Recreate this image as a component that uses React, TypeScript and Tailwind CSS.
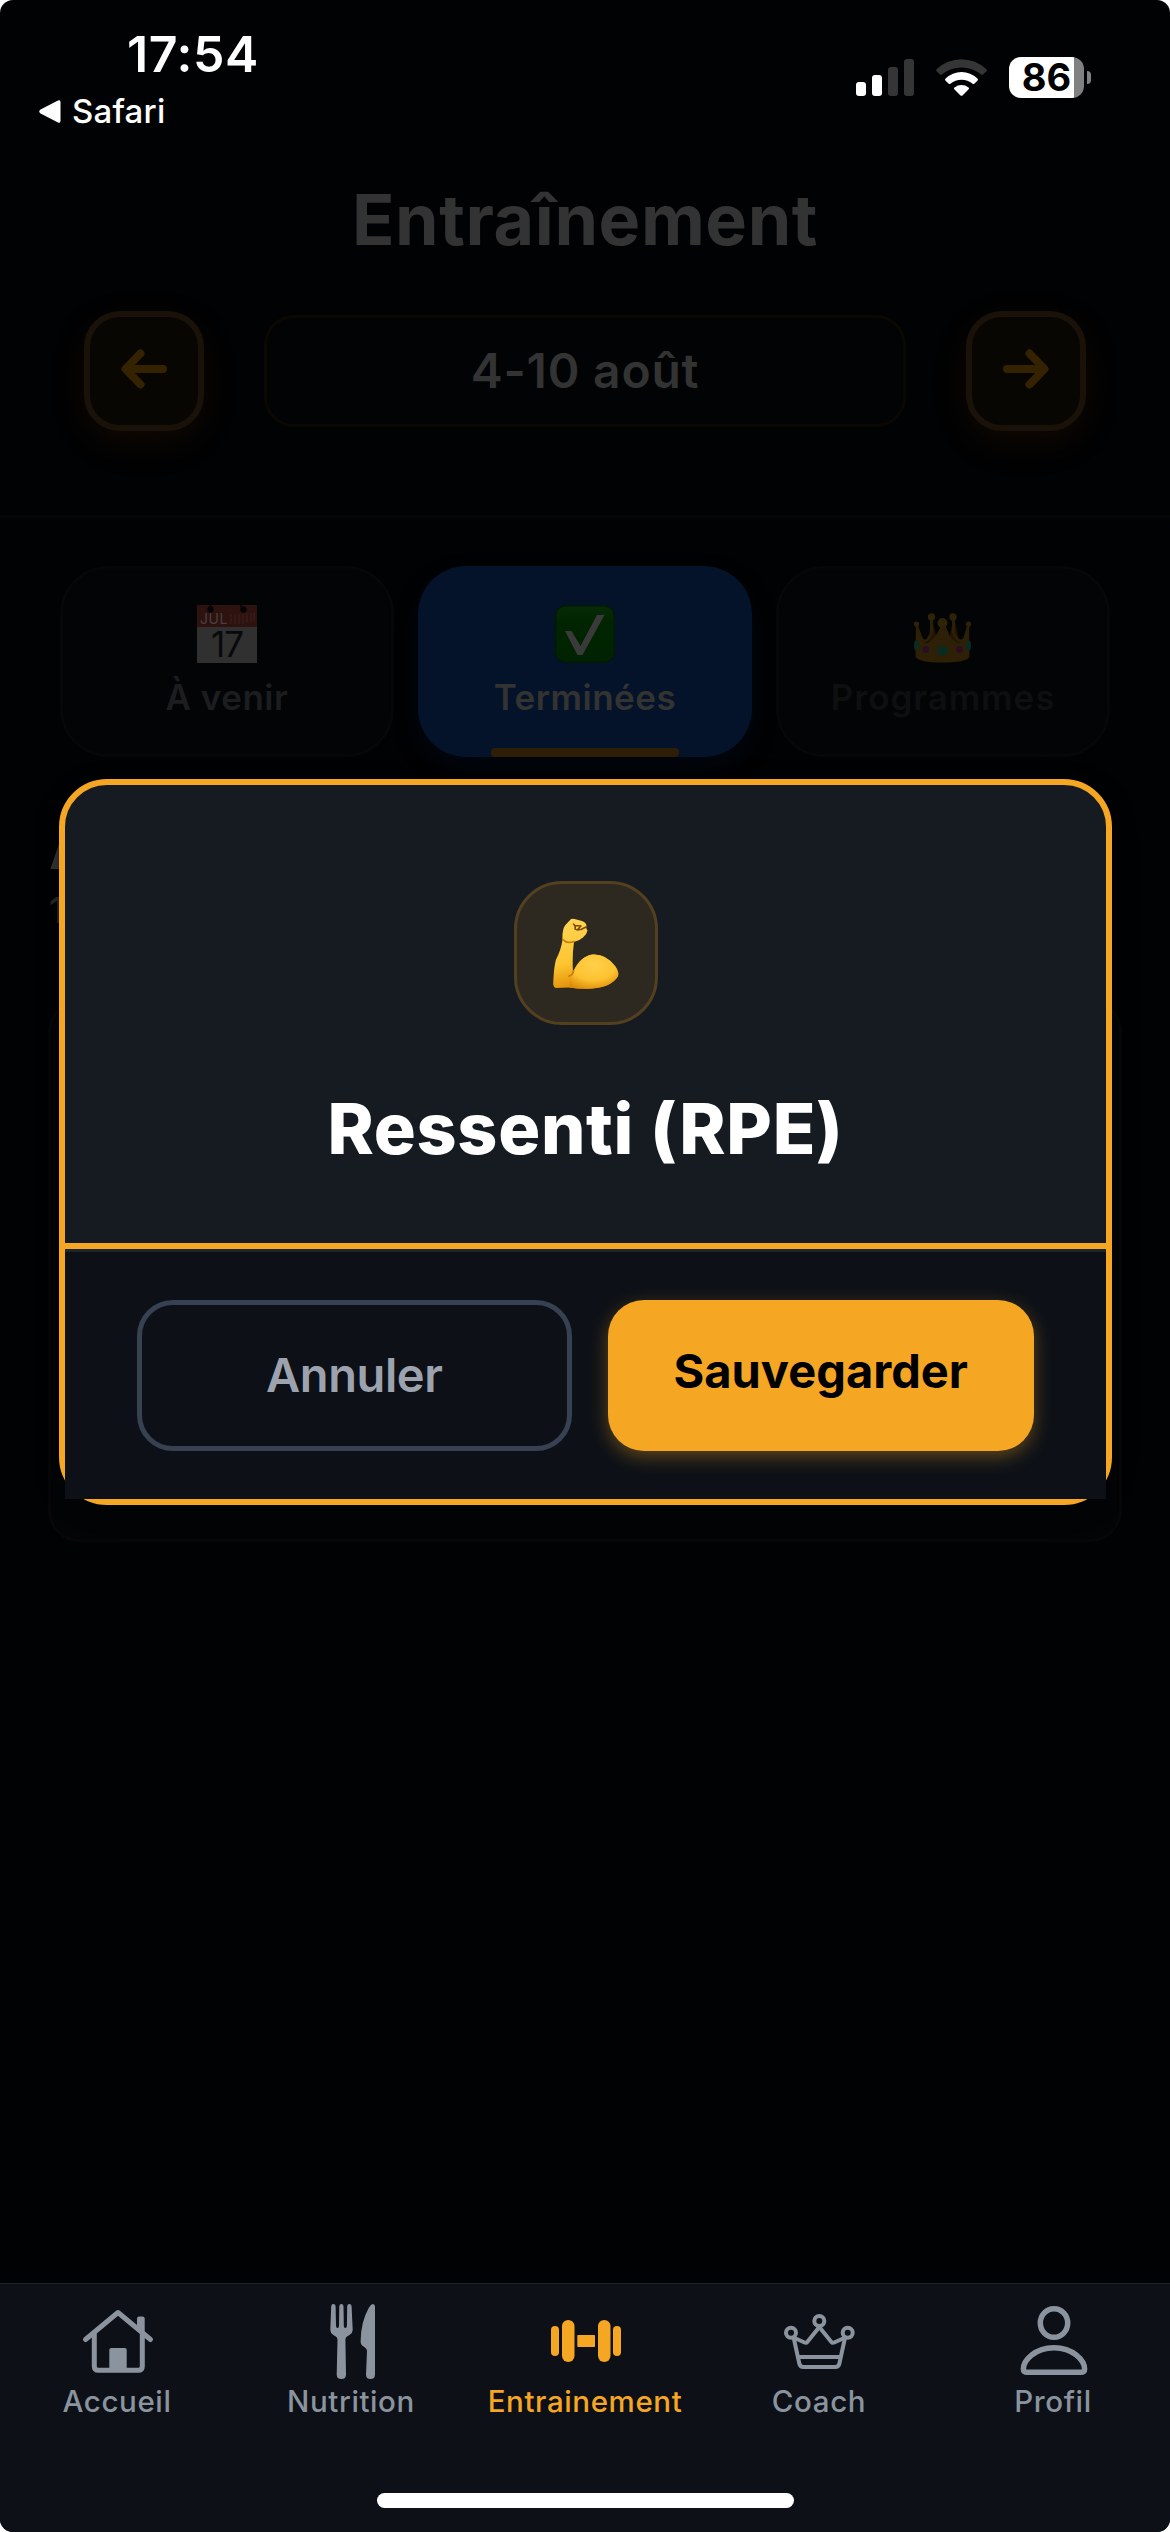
import type { ReactNode } from "react";

function StatusBar() {
  return (
    <div className="flex h-[160px] justify-between text-white">
      <div className="flex w-[300px] flex-col">
        <div className="mt-[24px] pl-[127px] text-[50px] leading-[60px] font-semibold tracking-[0.6px] whitespace-nowrap">17:54</div>
        <div className="mt-[7px] flex items-center gap-[11px] pl-[39px] text-[33px] leading-[40px] font-medium tracking-[0.2px]">
          <svg width="22" height="23" viewBox="0 0 22 23" fill="#fff">
            <path d="M1.5 9.6 19 .6Q21.500-.4 21.500 2.200V20.800Q21.500 23.400 19 22.400L1.500 13.400Q-1 11.500 1.500 9.600Z" />
          </svg>
          <span>Safari</span>
        </div>
      </div>
      <div className="mt-[57px] mr-[79px] flex h-[41px] items-center">
        <div className="flex h-[37px] items-end gap-[6px]">
          <i className="h-[14px] w-[10px] rounded-[3px] bg-white" />
          <i className="h-[21px] w-[10px] rounded-[3px] bg-white" />
          <i className="h-[29px] w-[10px] rounded-[3px] bg-[#353535]" />
          <i className="h-[37px] w-[10px] rounded-[3px] bg-[#353535]" />
        </div>
        <svg className="ml-[22px]" width="51" height="37" viewBox="0 0 51 37" fill="#fff">
          <path fill="#353535" d="M.6 12.200Q-.4 11 .8 10A36 36 0 0 1 50.200 10Q51.400 11 50.400 12.200L47 15.600Q46 16.400 45 15.600A30 30 0 0 0 6 15.600Q5 16.400 4 15.600Z" />
          <path d="M9.400 21.400Q8.500 20.400 9.600 19.400A23 23 0 0 1 41.400 19.400Q42.500 20.400 41.600 21.400L38.300 24.800Q37.500 25.400 36.600 24.800A17 17 0 0 0 14.400 24.800Q13.500 25.400 12.700 24.800Z" />
          <path d="M18.300 30.200Q17.500 29.300 18.500 28.500A11.500 11.500 0 0 1 32.500 28.500Q33.500 29.300 32.700 30.200L26.500 36.400Q25.500 37.200 24.500 36.400Z" />
        </svg>
        <div className="ml-[22px] flex h-[41px] w-[75px] items-center justify-center rounded-[12px] bg-[linear-gradient(to_right,#fff_65px,#808080_65px)] text-[38px] leading-[41px] font-bold text-black">
          86
        </div>
        <i className="ml-[3px] h-[13px] w-[4px] rounded-r-[4px] bg-[#808080]" />
      </div>
    </div>
  );
}

function ArrowButton({ flip = false }: { flip?: boolean }) {
  return (
    <button className="flex size-[120px] items-center justify-center rounded-[36px] border-[6px] border-[#1a1208] bg-[#080602] shadow-[0_12px_36px_rgba(120,60,6,0.12)]">
      <svg
        className={flip ? "-translate-y-[2px] -scale-x-100" : "-translate-y-[2px]"}
        width="48"
        height="40"
        viewBox="0 0 48 40"
        fill="none"
        stroke="#352200"
        strokeWidth="8"
        strokeLinecap="round"
        strokeLinejoin="round"
      >
        <path d="M43 20H6M20.500 4.500 5.500 20 20.500 35.500" />
      </svg>
    </button>
  );
}

function CalendarEmoji() {
  return (
    <svg className="overflow-visible" width="60" height="58" viewBox="0 0 60 58">
      <rect width="60" height="58" fill="#303030" />
      <rect width="60" height="22" fill="#2e1210" />
      <circle cx="13.500" cy="4.500" r="3.200" fill="#040506" />
      <circle cx="46.500" cy="4.500" r="3.200" fill="#040506" />
      <path d="M13.500 0v4M43.500 0l2 4" stroke="#040506" strokeWidth="1.500" />
      <text x="3" y="19" fontSize="14" fontWeight="400" fill="#484040" fontFamily="Inter, sans-serif">JUL</text>
      <path d="M34 9v10M38 9v10M42 9v10M46 9v10M50 8v10M54 8v9M57 8v8" stroke="#3a201e" strokeWidth="1" />
      <text x="30" y="52" textAnchor="middle" fontSize="35" fontWeight="400" letterSpacing="-1" fill="#08090a" fontFamily="Inter, sans-serif">17</text>
    </svg>
  );
}

function CheckEmoji() {
  return (
    <svg width="60" height="58" viewBox="0 0 60 58">
      <defs>
        <linearGradient id="check" x1="0" y1="0" x2="0" y2="1">
          <stop offset="0" stopColor="#082a08" />
          <stop offset=".3" stopColor="#002400" />
          <stop offset="1" stopColor="#002200" />
        </linearGradient>
      </defs>
      <rect x=".7" y=".7" width="58.600" height="56.600" rx="10" fill="url(#check)" stroke="#001a04" strokeWidth="1.400" />
      <path d="M10 26h6.500L25.500 41 42 10h7.500L27.500 50h-5Z" fill="#3a3a3a" />
    </svg>
  );
}

function CrownEmoji() {
  return (
    <svg width="58" height="50" viewBox="0 0 58 50">
      <path d="M14 34 17 3 22 22 28 28 36 22 40 3 46 34Z" fill="#231303" />
      <path
        d="M2 11 7 25Q12 33 17.500 20V5M28.500 10 34 22M39.500 5V20Q46 33 51 25L55 11"
        fill="none"
        stroke="#2b1f05"
        strokeWidth="3"
      />
      <path d="M2 12 6 24Q10 32 15 29Q23 24 28.500 9Q34 24 42 29Q47 32 51 24L55 12 55.500 44Q52 49.500 28.500 49.500Q5 49.500 1.500 44Z" fill="#2d2006" />
      <g fill="#2e2207">
        <circle cx="17.500" cy="4" r="3.700" />
        <circle cx="39" cy="4" r="3.700" />
        <circle cx="28.500" cy="10" r="5" />
        <circle cx="2.500" cy="11" r="2.600" />
        <circle cx="54.500" cy="11" r="2.600" />
      </g>
      <circle cx="28.500" cy="37.500" r="5.300" fill="#0b2a20" />
      <ellipse cx="2.500" cy="32.500" rx="2.500" ry="5.500" fill="#0b2a20" />
      <ellipse cx="54.500" cy="32.500" rx="2.500" ry="5.500" fill="#0b2a20" />
      <circle cx="12" cy="36.500" r="3.300" fill="#2b0c26" />
      <circle cx="45.500" cy="36.500" r="3.300" fill="#2b0c26" />
    </svg>
  );
}

function MuscleEmoji() {
  return (
    <svg width="66" height="71" viewBox="0 0 66 71">
      <defs>
        <linearGradient id="arm" x1="0" y1="0" x2=".25" y2="1">
          <stop offset="0" stopColor="#ffd65a" />
          <stop offset=".65" stopColor="#fdc530" />
          <stop offset="1" stopColor="#e08e06" />
        </linearGradient>
        <radialGradient id="biceps" cx=".5" cy=".3" r=".75">
          <stop offset="0" stopColor="#ffd04a" />
          <stop offset=".6" stopColor="#fdc231" />
          <stop offset="1" stopColor="#dd8c0a" />
        </radialGradient>
      </defs>
      <path
        d="M17.500 1.500Q19 .2 21.500 1L29 3Q33.500 4.500 33.500 8Q32.500 10 34.500 12.500Q34 16 30 19.500Q26 23 21 24Q19 38 20 54Q27 38 40 36.500Q53 36 62 48Q67 55 64.500 59Q58 69 39 70.500Q29 71.500 16 69.500L3 70Q0 69 .2 65Q1 48 3 41.500Q8 32 9.500 22Q9 12 12 7.500Z"
        fill="url(#arm)"
      />
      <path d="M20 55Q27 38 40 36.500Q53 36 62 48Q67 55 64.500 59Q58 69 39 70.500Q29 71.500 16 69.500Q17 60 20 55Z" fill="url(#biceps)" />
      <path d="M10.500 22Q14 26 21 23.500M16 58Q20 57 20.500 53" fill="none" stroke="#c97d08" strokeWidth="1.800" strokeLinecap="round" />
      <path d="M20.500 6Q23 8 22 11Q24 12.500 27 11.500M22 7.500 28 8 25 11M28 11.500 33 9" fill="none" stroke="#7a4a05" strokeWidth="1.500" strokeLinecap="round" strokeLinejoin="round" />
    </svg>
  );
}

function HomeIcon() {
  return (
    <svg className="translate-x-[1px]" width="84" height="84" viewBox="0 0 84 84" fill="none" stroke="currentColor" strokeWidth="5" strokeLinecap="round" strokeLinejoin="round">
      <path d="M9.500 39.500 42 12.500 74.500 39.500" />
      <path d="M18.300 33V66.200Q18.300 70.300 22.400 70.300H62.200Q66.300 70.300 66.300 66.200V33" />
      <path d="M61 18.500Q61 16.500 63 16.500H66.500Q68.700 16.500 68.700 18.500V35L61 28.500Z" fill="currentColor" stroke="none" />
      <path d="M33.300 50Q33.300 48 35.300 48H48.700Q50.700 48 50.700 50V70H33.300Z" fill="currentColor" stroke="none" />
    </svg>
  );
}

function CutleryIcon() {
  return (
    <svg width="84" height="84" viewBox="0 0 84 84" fill="currentColor">
      <path d="M24.300 4Q26.500 4 26.600 6.300L27 26Q27.200 28 28.500 28Q30 28 30 26L30.300 6.300Q30.500 4 32.400 4Q34.300 4 34.500 6.300L34.800 26Q34.800 28 36.300 28Q37.700 28 37.900 26L38.200 6.300Q38.400 4 40.500 4Q42.400 4 42.600 6.300L43.700 30Q43.700 33 40.500 35L38 36.500Q36.400 37.500 36.400 39.500L37 74.500Q37 79 32.400 79Q27.700 79 27.700 74.500L28.500 39.500Q28.500 37.500 26.800 36.500L24.300 35Q21.300 33 21.300 30L22.200 6.300Q22.400 4 24.300 4Z" />
      <path d="M63.700 4Q66 4 66 6.500V74.500Q66 79 61.500 79Q57 79 57 74.500L58 51Q58 49 56.200 47.800L53.500 45.800Q51.500 44.500 51.600 41.500Q51.700 22 60 7.500Q62 4 63.700 4Z" />
    </svg>
  );
}

function DumbbellIcon() {
  return (
    <svg width="84" height="84" viewBox="0 0 84 84" fill="currentColor">
      <rect x="8" y="26" width="8" height="30" rx="4" />
      <rect x="19" y="20" width="12.500" height="42" rx="6.200" />
      <rect x="34.300" y="35" width="17.700" height="12" rx=".8" />
      <rect x="55" y="20" width="12.500" height="42" rx="6.200" />
      <rect x="70" y="26" width="8" height="30" rx="4" />
    </svg>
  );
}

function CrownIcon() {
  return (
    <svg width="84" height="84" viewBox="0 0 84 84" fill="none" stroke="currentColor" strokeWidth="4" strokeLinejoin="round">
      <circle cx="14" cy="32.700" r="5" />
      <circle cx="42.300" cy="21" r="5" />
      <circle cx="70.700" cy="32.700" r="5" />
      <path d="M16.800 38.300 22.300 63.500Q23 67 26.500 67H58.200Q61.700 67 62.400 63.500L67.900 38.300" />
      <path d="M17.500 38 27.500 42.500Q29.300 43.300 30.500 41.700L42.300 27 54.200 41.700Q55.400 43.300 57.200 42.500L67.200 38M20.700 57H64" />
    </svg>
  );
}

function ProfileIcon() {
  return (
    <svg width="84" height="84" viewBox="0 0 84 84" fill="none" stroke="currentColor" strokeWidth="5.500">
      <ellipse cx="43" cy="23" rx="13.700" ry="14.300" />
      <path d="M12.400 69C12.400 60.500 24 47.800 43 47.800S73.600 60.500 73.600 69Q73.600 72.300 69.500 72.300H16.500Q12.400 72.300 12.400 69Z" />
    </svg>
  );
}

function Tab({ icon, label, className }: { icon: ReactNode; label: string; className: string }) {
  return (
    <div className={`relative flex h-[191px] flex-col items-center justify-end rounded-[48px] text-[35px] leading-[40px] font-semibold whitespace-nowrap ${className}`}>
      {icon}
      <span className="mt-[14px]">{label}</span>
    </div>
  );
}

function NavItem({ icon, label, active = false }: { icon: ReactNode; label: string; active?: boolean }) {
  return (
    <div className={`flex flex-1 flex-col items-center text-[29.5px] leading-[35px] font-medium tracking-[0.6px] ${active ? "text-[#f5a623]" : "text-[#8b949e]"}`}>
      {icon}
      <span>{label}</span>
    </div>
  );
}

export default function App() {
  return (
    <div className="bg-white">
      <div className="relative flex h-[2532px] w-[1170px] flex-col overflow-hidden rounded-[13px] bg-[#010203] font-['Inter',sans-serif]">
        <header className="h-[518px] border-b-[3px] border-[#060606]">
          <StatusBar />
          <h1 className="mt-[15px] text-center text-[70px] leading-[90px] font-bold tracking-[0.6px] text-[#333]">Entraînement</h1>
          <div className="mt-[46px] flex items-center justify-between px-[84px]">
            <ArrowButton />
            <div className="h-[112px] w-[642px] rounded-[30px] border-[3px] border-[#0b0802] bg-[#020305] text-center text-[48px] leading-[106px] font-semibold tracking-[0.8px] text-[#333]">
              4-10 août
            </div>
            <ArrowButton flip />
          </div>
        </header>

        <main className="flex flex-1 flex-col">
          <div className="mt-[48px] grid grid-cols-3 gap-[24px] px-[60px]">
            <Tab icon={<CalendarEmoji />} label="À venir" className="border-[3px] border-[#060708] bg-[#030406] pb-[37px] tracking-[0.5px] text-[#1c1d1f]" />
            <Tab
              icon={<CheckEmoji />}
              label="Terminées"
              className="bg-[#04132a] pb-[40px] tracking-[0.5px] text-[#333331] shadow-[0_12px_24px_rgba(4,19,42,0.3)] after:absolute after:bottom-0 after:left-[73px] after:h-[9px] after:w-[188px] after:rounded-[4px] after:bg-[#2f1e07]"
            />
            <Tab icon={<CrownEmoji />} label="Programmes" className="border-[3px] border-[#060708] bg-[#030406] pb-[37px] tracking-[0.9px] text-[#0e0f11]" />
          </div>
          <div className="mt-[57px] pl-[49px] text-[60px] leading-[66px] font-bold text-[#333]">A</div>
          <div className="mt-[10px] pl-[49px] text-[36px] leading-[40px] font-medium text-[#26272a]">1</div>
          <div className="mx-[48px] mt-[70px] h-[542px] rounded-[32px] border-[3px] border-[#070708] bg-[#030405]" />
        </main>

        <nav className="flex h-[249px] border-t border-[#1f2427] bg-[#0d1117] pt-[16px]">
          <NavItem icon={<HomeIcon />} label="Accueil" />
          <NavItem icon={<CutleryIcon />} label="Nutrition" />
          <NavItem icon={<DumbbellIcon />} label="Entrainement" active />
          <NavItem icon={<CrownIcon />} label="Coach" />
          <NavItem icon={<ProfileIcon />} label="Profil" />
        </nav>
        <div className="absolute bottom-[24px] left-[377px] h-[15px] w-[417px] rounded-full bg-white" />

        <div role="dialog" className="absolute top-[779px] left-[59px] h-[726px] w-[1053px] rounded-[48px] border-[6px] border-[#f5a623] bg-[#161b22] shadow-[0_6px_24px_rgba(0,0,0,0.3)]">
          <div className="flex h-[464px] flex-col items-center border-b-[6px] border-[#f5a623] pt-[96px]">
            <div className="flex size-[144px] items-center justify-center rounded-[48px] border-[3px] border-[#53401f] bg-[#2d2921]">
              <MuscleEmoji />
            </div>
            <h2 className="mt-[59px] text-[70px] leading-[90px] font-extrabold tracking-[0.7px] text-white">Ressenti (RPE)</h2>
          </div>
          <div className="flex h-[250px] items-start gap-[36px] border-t-[3px] border-[#1e2527] bg-[#0d1117] px-[72px] pt-[48px]">
            <button className="h-[151px] w-[435px] rounded-[36px] border-[5px] border-[#374151] text-[47px] font-semibold tracking-[-0.4px] text-[#9ca3af]">Annuler</button>
            <button className="h-[151px] w-[427px] rounded-[36px] bg-[#f5a623] pb-[9px] text-[47px] font-bold text-black shadow-[0_6px_18px_rgba(245,166,35,0.35)]">Sauvegarder</button>
          </div>
        </div>
      </div>
    </div>
  );
}
